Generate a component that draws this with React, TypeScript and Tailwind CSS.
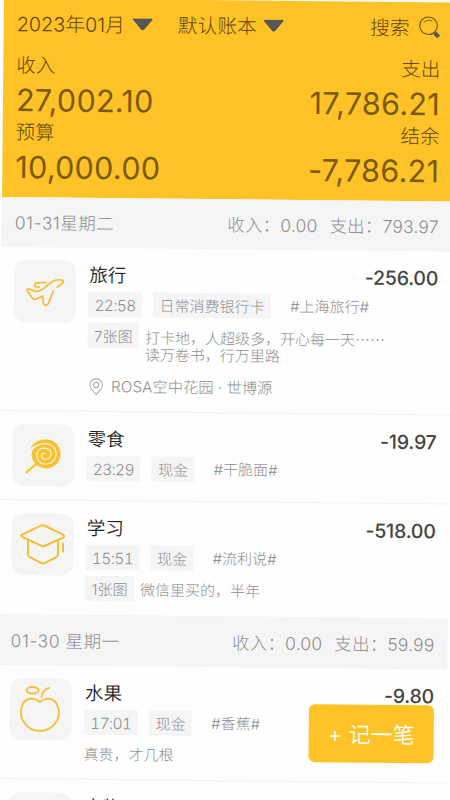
import type { ReactNode } from 'react';

interface Entry {
    title: string;
    amount?: string;
    time?: string;
    account?: string;
    tag?: string;
    photos?: string;
    note?: ReactNode;
    place?: string;
    icon: ReactNode;
    height: string;
}

const PlaneIcon = () => (
    <svg viewBox="0 0 62 62" className="size-[62px]" fill="none" stroke="#f5bd33" strokeWidth="1.7" strokeLinecap="round" strokeLinejoin="round">
        <path d="M31.700 22 23 22.500C21 22.800 19.800 25 21 26.200L25 26.800" />
        <path d="M43 26.500 48 22.800C50 21 49.500 19.200 46.500 19.200C42.500 19 40 19.800 37.500 21.500L29 28.500C26 31 23.500 31.500 20.500 30.800L15 28.800C13 28.300 12.500 29.500 13.500 31L18.500 38C19.500 39.500 20.500 39.500 22 38.700L28.800 35.500 29.300 42.500C29.500 45.200 32.500 45.700 34 43.500C35.500 41 37 36 39.300 30.500" />
    </svg>
);

const LollipopIcon = () => (
    <svg viewBox="0 0 62 62" className="size-[62px]" fill="none" strokeLinecap="round">
        <path d="M18 25C20 18 27 14.500 33.500 15A14.500 14.500 0 1 1 19.500 33C18.500 29 20 24 24 20.500C21 21.500 19 23.500 18 25Z" fill="#f9c02f" />
        <path d="M24 39.500 14.200 48" stroke="#f9c02f" strokeWidth="2.200" />
        <path d="M18.700 26.500C23 20.500 28 19 33 19.200C39 19.500 43.700 23.500 43.700 29C43.700 35.500 39 39.800 33.500 39.800C28 39.800 24.300 36 24.300 31.500C24.300 27 27 23.800 31.500 23.800C36 23.800 38.700 26 38.700 29.500C38.700 32.800 36 34.800 33 34.800C30 34.800 28.500 32.800 29 30.800C29.300 29.200 31 28.500 32.500 29.200" stroke="#fbf6e8" strokeWidth="1.200" />
    </svg>
);

const CapIcon = () => (
    <svg viewBox="0 0 62 62" className="size-[62px]" fill="none" stroke="#f5bd33" strokeWidth="2" strokeLinecap="round" strokeLinejoin="round">
        <path d="M10.500 21.500 29 12.300Q31 11.300 33 12.300L51 20.800Q54 22.500 51.500 24L33.500 32.300Q31.500 33.300 29.500 32.300L11 24Q8.500 22.700 10.500 21.500Z" />
        <path d="M16.500 27.500V41Q16.500 42.500 18 43.500L29.500 49.500Q31.500 50.500 33.500 49.500L45 43.500Q46.500 42.500 46.500 41V27.500M51.500 30V38" />
    </svg>
);

const FruitIcon = () => (
    <svg viewBox="0 0 62 62" className="size-[62px]" fill="none" stroke="#f5bd33" strokeWidth="1.800" strokeLinecap="round">
        <ellipse cx="22.500" cy="12" rx="6" ry="3.300" />
        <path d="M31.500 18.500C32 13.500 34.500 10.500 39 9.500" />
        <path d="M30 23.500Q28.500 22.500 26.500 21.300C20 18.500 14 21.500 12 28C8 40 17 52.500 30 52.500C43 52.500 52 40 48 28.500C46 21.500 40 18.500 33.500 21.300Q31.500 22.500 30 23.500Z" />
    </svg>
);

const PinIcon = () => (
    <svg viewBox="0 0 14 18" className="w-3.5 h-[18px]" fill="none" stroke="#a5a5a7" strokeWidth="1">
        <path d="M7 16.500C3 12.500 .7 10 .7 7A6.300 6.300 0 0 1 13.300 7C13.300 10 11 12.500 7 16.500Z" />
        <circle cx="7" cy="7" r="2.600" />
    </svg>
);

const SearchIcon = () => (
    <svg viewBox="0 0 22 22" className="mb-[3px] size-[22px]" fill="none">
        <circle cx="9.800" cy="9.500" r="8.800" stroke="#6b5417" strokeWidth="1.100" />
        <path d="M5 6.500Q8.500 2.500 13.500 4.800" stroke="#6b5417" strokeWidth=".9" />
        <path d="M16 16.500 20 20.500" stroke="#555" strokeWidth="4" />
    </svg>
);

const Caret = () => (
    <svg viewBox="0 0 20 12" className="mb-1 w-5 h-3">
        <path d="M1 1H19L10.700 10.800Q10 11.500 9.300 10.800Z" fill="#575757" stroke="#575757" strokeWidth="1.800" strokeLinejoin="round" />
    </svg>
);

const january31: Entry[] = [
    {
        title: '旅行',
        amount: '-256.00',
        time: '22:58',
        account: '日常消费银行卡',
        tag: '#上海旅行#',
        photos: '7张图',
        note: <>打卡地，人超级多，开心每一天<span className="font-['Noto_Sans_CJK_SC',sans-serif]">……</span><br />读万卷书，行万里路</>,
        place: 'ROSA空中花园 · 世博源',
        icon: <PlaneIcon />,
        height: 'h-[164px]',
    },
    { title: '零食', amount: '-19.97', time: '23:29', account: '现金', tag: '#干脆面#', icon: <LollipopIcon />, height: 'h-[89px]' },
    { title: '学习', amount: '-518.00', time: '15:51', account: '现金', tag: '#流利说#', photos: '1张图', note: '微信里买的，半年', icon: <CapIcon />, height: 'h-[115px]' },
];

const january30: Entry[] = [
    { title: '水果', amount: '-9.80', time: '17:01', account: '现金', tag: '#香蕉#', note: '真贵，才几根', icon: <FruitIcon />, height: 'h-[114px]' },
    { title: '衣物', icon: null, height: 'h-[89px]' },
];

function Total({ label, value, right }: { label: string; value: string; right?: boolean }) {
    return (
        <div className={right ? 'text-right' : ''}>
            <div className="h-[27px] text-[19.5px] leading-[29px]">{label}</div>
            <div className="h-10 text-[30.5px] leading-[43px] font-normal tracking-[0.01em] text-[#7a5a08]">{value}</div>
        </div>
    );
}

function DayBar({ date, income, expense }: { date: string; income: string; expense: string }) {
    return (
        <div className="flex h-[50px] items-center justify-between bg-[#f5f5f6] px-[13px] pt-[3px] text-[17.5px] font-light text-[#8f8f92]">
            <span className="tracking-[0.03em]">{date}</span>
            <div className="flex gap-3 tracking-[0.01em]">
                <span>收入：{income}</span>
                <span>支出：{expense}</span>
            </div>
        </div>
    );
}

function Chip({ children }: { children: ReactNode }) {
    return <span className="h-[25px] shrink-0 bg-[#f5f5f6] px-[6.5px] leading-[27px]">{children}</span>;
}

function EntryRow({ entry }: { entry: Entry }) {
    return (
        <div className={`flex border-b border-[#f2f2f3] px-[13px] pt-[13px] ${entry.height}`}>
            <div className="size-[62px] shrink-0 rounded-xl bg-[#f5f5f6]">{entry.icon}</div>
            <div className="ml-3 flex-1 text-[15px] font-light text-[#8f8f92]">
                <div className="flex h-[30px] justify-between leading-[28px]">
                    <span className="pl-px text-[18.5px] font-[350] text-[#1f1f1f]">{entry.title}</span>
                    <span className="text-[19.5px] font-medium tracking-[-0.01em] text-[#444]">{entry.amount}</span>
                </div>
                {entry.time && (
                    <div className="flex items-center">
                        <Chip><span className="text-[15.5px] tracking-[-0.04em] tabular-nums">{entry.time}</span></Chip>
                        <span className="w-[11px]" />
                        <Chip>{entry.account}</Chip>
                        <span className="ml-[19px] leading-[27px]">{entry.tag}</span>
                    </div>
                )}
                {entry.note && (
                    <div className="mt-[5px] flex gap-1.5">
                        {entry.photos && <Chip>{entry.photos}</Chip>}
                        <p className="pt-[5px] leading-[17px] whitespace-nowrap">{entry.note}</p>
                    </div>
                )}
                {entry.place && (
                    <div className="mt-[13px] flex items-center gap-2 pl-0.5 text-[15.3px]">
                        <PinIcon />
                        <span>{entry.place}</span>
                    </div>
                )}
            </div>
        </div>
    );
}

export default function App() {
    return (
        <div className="h-[800px] w-[450px] overflow-hidden bg-[#fefefe] font-[Inter,'Noto_Sans_CJK_SC',sans-serif]">
            {/* The whole phone page leans slightly clockwise */}
            <div className="relative -mt-0.5 ml-1 h-[880px] w-[450px] origin-top-left rotate-[0.57deg] bg-[#fefefe]">
                <header className="h-[199px] bg-[#ffc328] px-[13px] font-light text-[#5f4708]">
                    <div className="flex h-[53px] items-center text-[19.8px]">
                        <span>2023年01月</span>
                        <span className="ml-2"><Caret /></span>
                        <span className="ml-[25px]">默认账本</span>
                        <span className="ml-[7px]"><Caret /></span>
                        <span className="ml-auto mr-[9px]">搜索</span>
                        <SearchIcon />
                    </div>
                    <div className="flex justify-between">
                        <div>
                            <Total label="收入" value="27,002.10" />
                            <Total label="预算" value="10,000.00" />
                        </div>
                        <div>
                            <Total label="支出" value="17,786.21" right />
                            <Total label="结余" value="-7,786.21" right />
                        </div>
                    </div>
                </header>

                <DayBar date="01-31星期二" income="0.00" expense="793.97" />
                {january31.map((entry) => <EntryRow key={entry.title} entry={entry} />)}

                <DayBar date="01-30 星期一" income="0.00" expense="59.99" />
                {january30.map((entry) => <EntryRow key={entry.title} entry={entry} />)}

                <button className="absolute top-[703px] left-[312px] h-[58px] w-[125px] rounded-md bg-[#ffc328] pt-0.5 text-[22px] font-[350] text-white">
                    + 记一笔
                </button>
            </div>
        </div>
    );
}
